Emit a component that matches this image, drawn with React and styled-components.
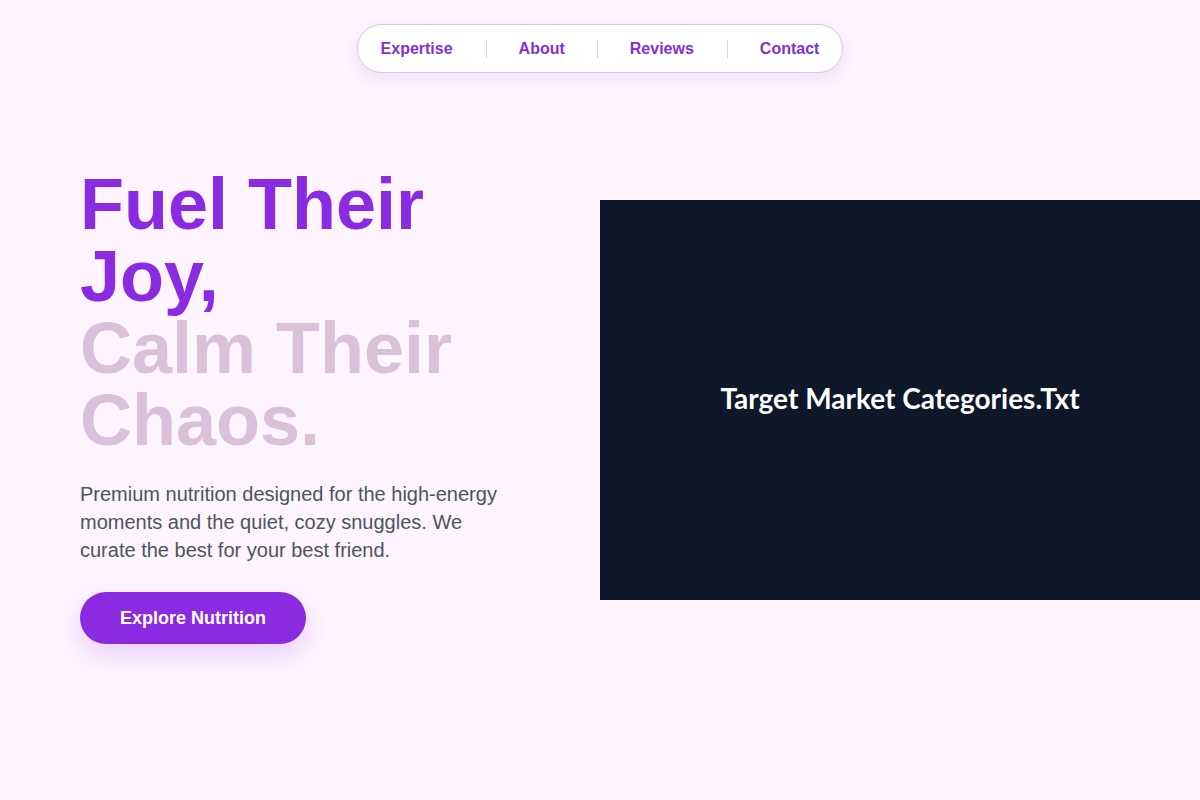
import React from "react";
import styled, { createGlobalStyle } from "styled-components";

const GlobalStyle = createGlobalStyle`
  * {
    box-sizing: border-box;
  }

  body {
    margin: 0;
    background: #fdf4fd;
    font-family: "Liberation Sans", Arial, sans-serif;
  }
`;

const Page = styled.div`
  min-height: 800px;
  display: flex;
  flex-direction: column;
  align-items: center;
  padding-top: 24px;
`;

const Nav = styled.nav`
  display: flex;
  align-items: center;
  padding: 14px 23px;
  background: #ffffff;
  border: 1px solid #dcc4dc;
  border-radius: 999px;
  box-shadow: 0 6px 16px rgba(138, 43, 226, 0.1);
`;

const NavLink = styled.a`
  font-size: 16px;
  line-height: 19px;
  font-weight: 700;
  color: #8430d4;
  text-decoration: none;
  cursor: pointer;
`;

const Divider = styled.span`
  width: 1px;
  height: 18px;
  margin: 0 32px 0 33px;
  background: #d4d4d8;

  &:nth-of-type(2) {
    margin: 0 32px;
  }
`;

const Hero = styled.section`
  width: 100%;
  display: grid;
  grid-template-columns: 520px 600px;
  align-items: start;
  padding-left: 80px;
  margin-top: 95px;
`;

const Copy = styled.div`
  display: flex;
  flex-direction: column;
  align-items: flex-start;
`;

const Title = styled.h1`
  margin: 0;
  font-size: 72px;
  line-height: 72px;
  font-weight: 700;
`;

const Line = styled.span`
  display: block;
  color: ${(p) => (p.$soft ? "#dbc0da" : "#8a2be2")};
`;

const Lead = styled.p`
  margin: 24px 0 0;
  max-width: 440px;
  font-size: 20px;
  line-height: 28px;
  color: #4b5563;
`;

const Cta = styled.button`
  margin-top: 28px;
  padding: 16px 40px;
  border: none;
  border-radius: 999px;
  background: #8a2be2;
  color: #ffffff;
  font-family: inherit;
  font-size: 18px;
  line-height: 20px;
  font-weight: 700;
  cursor: pointer;
  box-shadow: 0 10px 24px rgba(138, 43, 226, 0.18);
`;

const Visual = styled.div`
  margin-top: 32px;
  height: 400px;
  display: flex;
  align-items: center;
  justify-content: center;
  padding-bottom: 4px;
  background: #0f172a;
  color: #ffffff;
  font-family: Lato, "Open Sans", sans-serif;
  font-weight: 700;
  font-size: 28px;
`;

const links = ["Expertise", "About", "Reviews", "Contact"];

export default function App() {
  return (
    <>
      <GlobalStyle />
      <Page>
        <Nav>
          {links.map((l, i) => (
            <React.Fragment key={l}>
              {i > 0 && <Divider />}
              <NavLink>{l}</NavLink>
            </React.Fragment>
          ))}
        </Nav>
        <Hero>
          <Copy>
            <Title>
              <Line>Fuel Their</Line>
              <Line>Joy,</Line>
              <Line $soft>Calm Their</Line>
              <Line $soft>Chaos.</Line>
            </Title>
            <Lead>
              Premium nutrition designed for the high-energy moments and the
              quiet, cozy snuggles. We curate the best for your best friend.
            </Lead>
            <Cta>Explore Nutrition</Cta>
          </Copy>
          <Visual>Target Market Categories.Txt</Visual>
        </Hero>
      </Page>
    </>
  );
}
